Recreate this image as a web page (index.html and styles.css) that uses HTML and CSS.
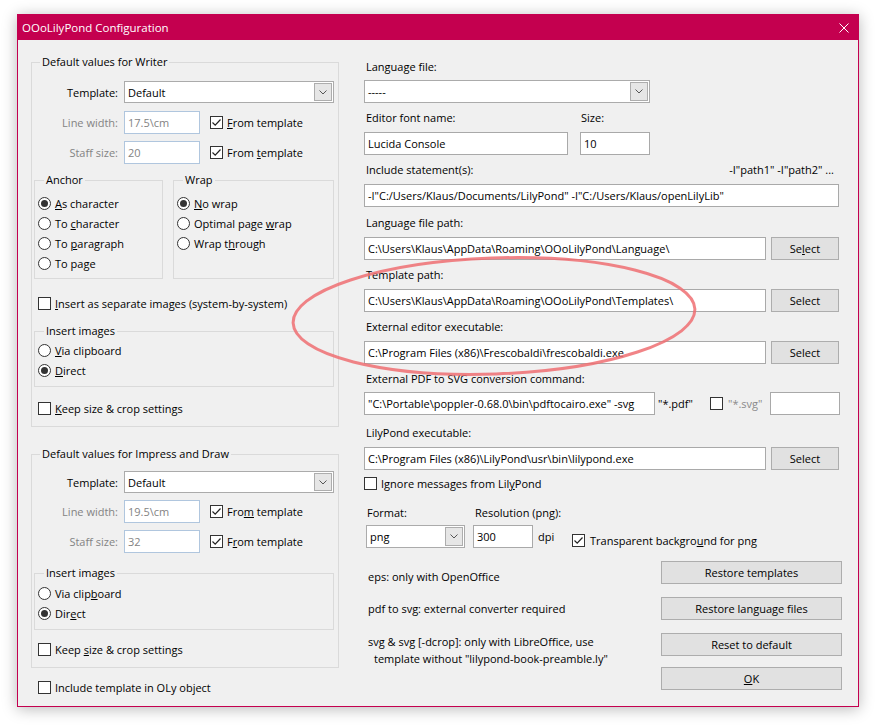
FILE: index.html
```html
<!DOCTYPE html>
<html>
<head>
<meta charset="utf-8">
<title>OOoLilyPond Configuration</title>
<link rel="stylesheet" href="styles.css">
</head>
<body>
<div class="window">
  <div class="titlebar">
    <span class="title">OOoLilyPond Configuration</span>
    <svg class="close" width="10" height="10" viewBox="0 0 10 10"><path d="M0.5 0.5 L9.5 9.5 M9.5 0.5 L0.5 9.5" stroke="#fff" stroke-width="1" fill="none"/></svg>
  </div>
  <div class="content">
    <div class="left">
      <fieldset class="group writer">
        <legend>Default values for Writer</legend>
        <div class="frow crow">
          <span class="flabel">Template:</span>
          <div class="combo w210">Default<span class="drop"><svg width="8" height="5" viewBox="0 0 8 5"><polyline points="0.5,0.5 4,4 7.5,0.5" fill="none" stroke="#555" stroke-width="1"/></svg></span></div>
        </div>
        <div class="frow">
          <span class="flabel dis">Line width:</span>
          <div class="field dis w76">17.5\cm</div>
          <span class="chk ml10"><span class="cb on"><svg width="11" height="11" viewBox="0 0 11 11"><path d="M1.5 5.5 L4.2 8.2 L9.5 2.5" fill="none" stroke="#222" stroke-width="1.2"/></svg></span><span><u>F</u>rom template</span></span>
        </div>
        <div class="frow">
          <span class="flabel dis">Staff size:</span>
          <div class="field dis w76">20</div>
          <span class="chk ml10"><span class="cb on"><svg width="11" height="11" viewBox="0 0 11 11"><path d="M1.5 5.5 L4.2 8.2 L9.5 2.5" fill="none" stroke="#222" stroke-width="1.2"/></svg></span><span>From <u>t</u>emplate</span></span>
        </div>
        <div class="pair">
          <fieldset class="group sub anchor">
            <legend>Anchor</legend>
            <div class="opt"><span class="rb on"></span><span><u>A</u>s character</span></div>
            <div class="opt"><span class="rb"></span><span>To <u>c</u>haracter</span></div>
            <div class="opt"><span class="rb"></span><span>To <u>p</u>aragraph</span></div>
            <div class="opt"><span class="rb"></span><span>To pa<u>g</u>e</span></div>
          </fieldset>
          <fieldset class="group sub wrapbox">
            <legend>Wrap</legend>
            <div class="opt"><span class="rb on"></span><span><u>N</u>o wrap</span></div>
            <div class="opt"><span class="rb"></span><span>Optimal page <u>w</u>rap</span></div>
            <div class="opt"><span class="rb"></span><span>Wrap t<u>h</u>rough</span></div>
          </fieldset>
        </div>
        <div class="opt sep"><span class="cb"></span><span><u>I</u>nsert as separate images (system-by-system)</span></div>
        <fieldset class="group sub images">
          <legend>Insert images</legend>
          <div class="opt"><span class="rb"></span><span><u>V</u>ia clipboard</span></div>
          <div class="opt"><span class="rb on"></span><span><u>D</u>irect</span></div>
        </fieldset>
        <div class="opt keep"><span class="cb"></span><span><u>K</u>eep size &amp; crop settings</span></div>
      </fieldset>

      <fieldset class="group impress">
        <legend>Default values for Impress and Draw</legend>
        <div class="frow crow">
          <span class="flabel">Template:</span>
          <div class="combo w210">Default<span class="drop"><svg width="8" height="5" viewBox="0 0 8 5"><polyline points="0.5,0.5 4,4 7.5,0.5" fill="none" stroke="#555" stroke-width="1"/></svg></span></div>
        </div>
        <div class="frow">
          <span class="flabel dis">Line width:</span>
          <div class="field dis w76">19.5\cm</div>
          <span class="chk ml10"><span class="cb on"><svg width="11" height="11" viewBox="0 0 11 11"><path d="M1.5 5.5 L4.2 8.2 L9.5 2.5" fill="none" stroke="#222" stroke-width="1.2"/></svg></span><span>Fro<u>m</u> template</span></span>
        </div>
        <div class="frow mb8">
          <span class="flabel dis">Staff size:</span>
          <div class="field dis w76">32</div>
          <span class="chk ml10"><span class="cb on"><svg width="11" height="11" viewBox="0 0 11 11"><path d="M1.5 5.5 L4.2 8.2 L9.5 2.5" fill="none" stroke="#222" stroke-width="1.2"/></svg></span><span>F<u>r</u>om template</span></span>
        </div>
        <fieldset class="group sub images images2">
          <legend>Insert images</legend>
          <div class="opt"><span class="rb"></span><span>Via clip<u>b</u>oard</span></div>
          <div class="opt"><span class="rb on"></span><span>Dir<u>e</u>ct</span></div>
        </fieldset>
        <div class="opt keep2"><span class="cb"></span><span>Keep <u>s</u>ize &amp; crop settings</span></div>
      </fieldset>
      <div class="opt incl"><span class="cb"></span><span>Include template in OLy ob<u>j</u>ect</span></div>
    </div>

    <div class="right">
      <div class="blk b1">
        <div class="lbl">Language file:</div>
        <div class="combo w286 h23">-----<span class="drop"><svg width="8" height="5" viewBox="0 0 8 5"><polyline points="0.5,0.5 4,4 7.5,0.5" fill="none" stroke="#555" stroke-width="1"/></svg></span></div>
      </div>
      <div class="blk">
        <div class="lbl split"><span class="fontlbl">Editor font name:</span><span>Size:</span></div>
        <div class="ctl"><div class="field w204">Lucida Console</div><div class="field w70 ml12">10</div></div>
      </div>
      <div class="blk b3">
        <div class="lbl between"><span>Include statement(s):</span><span>-I"path1" -I"path2" ...</span></div>
        <div class="ctl"><div class="field w475">-I"C:/Users/Klaus/Documents/LilyPond" -I"C:/Users/Klaus/openLilyLib"</div></div>
      </div>
      <div class="blk">
        <div class="lbl">Language file path:</div>
        <div class="ctl path"><div class="field grow">C:\Users\Klaus\AppData\Roaming\OOoLilyPond\Language\</div><div class="btn sel">Se<u>l</u>ect</div></div>
      </div>
      <div class="blk">
        <div class="lbl">Template path:</div>
        <div class="ctl path"><div class="field grow">C:\Users\Klaus\AppData\Roaming\OOoLilyPond\Templates\</div><div class="btn sel">Select</div></div>
      </div>
      <div class="blk">
        <div class="lbl">External editor executable:</div>
        <div class="ctl path"><div class="field grow">C:\Program Files (x86)\Frescobaldi\frescobaldi.exe</div><div class="btn sel">Select</div></div>
      </div>
      <div class="blk b5">
        <div class="lbl">External PDF to SVG conversion command:</div>
        <div class="ctl pdf">
          <div class="field w291">"C:\Portable\poppler-0.68.0\bin\pdftocairo.exe" -svg</div>
          <span class="pdftxt">"*.pdf"</span>
          <span class="cb"></span>
          <span class="svgtxt">"*.svg"</span>
          <div class="field w70"></div>
        </div>
      </div>
      <div class="blk b6">
        <div class="lbl">LilyPond executable:</div>
        <div class="ctl path"><div class="field grow">C:\Program Files (x86)\LilyPond\usr\bin\lilypond.exe</div><div class="btn sel">Select</div></div>
      </div>
      <div class="opt ignore"><span class="cb"></span><span>Ignore messages from Lil<u>y</u>Pond</span></div>
      <div class="lbl fmtlbl"><span class="fmtcol">Format:</span><span>Resolution (png):</span></div>
      <div class="ctl fmt">
        <div class="combo w99 h23">png<span class="drop"><svg width="8" height="5" viewBox="0 0 8 5"><polyline points="0.5,0.5 4,4 7.5,0.5" fill="none" stroke="#555" stroke-width="1"/></svg></span></div>
        <div class="field w60 ml8">300</div>
        <span class="dpi">dpi</span>
        <span class="chk transp"><span class="cb on"><svg width="11" height="11" viewBox="0 0 11 11"><path d="M1.5 5.5 L4.2 8.2 L9.5 2.5" fill="none" stroke="#222" stroke-width="1.2"/></svg></span><span>Transparent backgro<u>u</u>nd for png</span></span>
      </div>
      <div class="bottom">
        <div class="notes">
          <div class="note n1">eps: only with OpenOffice</div>
          <div class="note n2">pdf to svg: external converter required</div>
          <div class="note n3"><span class="line">svg &amp; svg [-dcrop]: only with LibreOffice, use</span><span class="line ind">template without "lilypond-book-preamble.ly"</span></div>
        </div>
        <div class="buttons">
          <div class="btn big">Restore templates</div>
          <div class="btn big">Restore language files</div>
          <div class="btn big">Reset to default</div>
          <div class="btn big ok"><u>O</u>K</div>
        </div>
      </div>
    </div>
  </div>
</div>
<svg class="annot" width="878" height="725" viewBox="0 0 878 725"><ellipse cx="494" cy="316" rx="201" ry="58" transform="rotate(-2 494 316)" fill="none" stroke="#EE6E72" stroke-opacity="0.85" stroke-width="3"/></svg>
</body>
</html>
```
FILE: styles.css
```css
* { box-sizing: border-box; }
html, body { margin: 0; padding: 0; background: #ffffff; }
body {
  position: relative;
  width: 878px;
  height: 725px;
  overflow: hidden;
  padding: 14px 0 0 17px;
  font-family: "Open Sans", "Noto Sans", sans-serif;
  font-size: 11px;
  color: #000;
}
u { text-decoration: underline; text-underline-offset: 1px; }

.window {
  width: 842px;
  height: 693px;
  border: 1px solid #C4004F;
  background: #F0F0F0;
  box-shadow: 0 2px 14px rgba(0,0,0,0.28);
  display: flex;
  flex-direction: column;
}
.titlebar {
  height: 25px;
  flex: none;
  background: #C4004F;
  color: #fff;
  display: flex;
  align-items: center;
  justify-content: space-between;
  padding: 0 9px 0 4px;
}
.title { font-size: 11.5px; }
.close { display: block; }

.content {
  display: flex;
  padding: 0 16px 0 13px;
  flex: 1;
}
.left { width: 308px; flex: none; }
.right { width: 478px; flex: none; margin-left: 25px; padding-top: 19px; }

fieldset { margin: 0; padding: 0; border: 1px solid #DADADA; min-width: 0; }
legend { padding: 0 2px; margin-left: 6px; line-height: 16px; height: 16px; white-space: nowrap; }

.writer { margin-top: 14px; padding: 11px 4px 8px 2px; }
.impress { margin-top: 19px; padding: 9px 4px 8px 2px; }

.frow { display: flex; align-items: center; height: 23px; margin-bottom: 7px; }
.frow.crow { height: 22px; }
.writer > .frow.crow { margin-bottom: 8px; }
.frow.mb8 { margin-bottom: 12px; }
.flabel { width: 84px; margin-right: 6px; text-align: right; white-space: nowrap; }
.flabel.dis { color: #838383; }

.combo {
  display: flex;
  align-items: center;
  height: 100%;
  background: #fff;
  border: 1px solid #ABABAB;
  padding-left: 3px;
  white-space: nowrap;
}
.combo.h23 { height: 23px; }
.drop {
  margin-left: auto;
  margin-right: 1px;
  width: 18px;
  height: calc(100% - 2px);
  background: #E6E6E6;
  border: 1px solid #ADADAD;
  display: flex;
  align-items: center;
  justify-content: center;
}
.drop svg { display: block; }

.field {
  height: 23px;
  background: #fff;
  border: 1px solid #A9A9A9;
  padding-left: 3px;
  display: flex;
  align-items: center;
  white-space: nowrap;
  overflow: hidden;
  flex: none;
}
.field.dis { border-color: #B0C6DE; color: #838383; }
.field.grow { flex: 1; }

.w60 { width: 60px; }
.w70 { width: 70px; }
.w76 { width: 76px; }
.w99 { width: 99px; }
.w204 { width: 204px; }
.w210 { width: 210px; }
.w286 { width: 286px; }
.w291 { width: 291px; }
.w475 { width: 475px; }
.ml8 { margin-left: 8px; }
.ml10 { margin-left: 10px; }
.ml12 { margin-left: 12px; }

.chk { display: inline-flex; align-items: center; white-space: nowrap; }
.chk .cb { margin-right: 4px; }
.cb {
  width: 13px;
  height: 13px;
  flex: none;
  background: #fff;
  border: 1px solid #333;
  display: inline-flex;
  align-items: center;
  justify-content: center;
}
.cb svg { display: block; }
.rb {
  width: 13px;
  height: 13px;
  flex: none;
  border-radius: 50%;
  background: #fff;
  border: 1px solid #333;
  display: inline-flex;
  align-items: center;
  justify-content: center;
}
.rb.on::after {
  content: "";
  width: 7px;
  height: 7px;
  border-radius: 50%;
  background: #333;
}

.opt { display: flex; align-items: center; height: 20px; white-space: nowrap; }
.opt .rb, .opt .cb { margin-right: 4px; }

.pair { display: flex; gap: 10px; margin-top: 8px; }
.sub { padding: 5px 0 5px 3px; }
.anchor { width: 129px; }
.wrapbox { width: 161px; }
.sep { margin-top: 14px; padding-left: 4px; }
.images { margin-top: 10px; padding: 1px 0 6px 3px; }
.images.images2 { margin-top: 0; padding-top: 2px; }
.keep { margin-top: 11px; padding-left: 4px; }
.keep2 { margin-top: 9px; padding-left: 4px; }
.incl { margin-top: 9px; padding-left: 7px; }

/* right column */
.blk { margin-bottom: 7px; }
.blk.b1 .lbl { margin-bottom: 5px; }
.blk.b3 { margin-bottom: 8px; }
.blk.b5 { margin-bottom: 10px; }
.blk.b5 .lbl { margin-bottom: 5px; }
.blk.b6 { margin-bottom: 3px; }
.lbl { height: 16px; line-height: 16px; padding-left: 2px; margin-bottom: 6px; white-space: nowrap; }
.lbl.split { display: flex; }
.fontlbl { width: 215px; }
.lbl.between { display: flex; justify-content: space-between; padding-right: 8px; }
.ctl { display: flex; align-items: center; height: 23px; }
.ctl.path { width: 475px; }
.btn {
  background: #E1E1E1;
  border: 1px solid #ADADAD;
  display: flex;
  align-items: center;
  justify-content: center;
  white-space: nowrap;
}
.btn.sel { width: 68px; height: 23px; margin-left: 5px; flex: none; }

.pdftxt { width: 49px; margin-left: 3px; white-space: nowrap; flex: none; }
.ctl.pdf .cb { margin-left: 3px; }
.svgtxt { width: 37px; margin-left: 5px; color: #8A8A8A; white-space: nowrap; flex: none; }
.ctl.pdf .field.w70 { margin-left: 5px; }

.ignore { margin-top: 3px; }
.fmtlbl { display: flex; margin-top: 12px; margin-bottom: 4px; padding-left: 3px; }
.fmtcol { width: 108px; }
.ctl.fmt { padding-left: 2px; }
.dpi { width: 20px; margin-left: 5px; flex: none; }
.transp { margin-left: 14px; margin-top: 7px; }
.transp .cb { margin-right: 5px; }

.bottom { display: flex; margin-top: 13px; }
.notes { width: 297px; padding-left: 4px; flex: none; }
.note { line-height: 16px; white-space: nowrap; }
.n1 { padding-top: 8px; }
.n2 { margin-top: 16px; }
.n3 { margin-top: 16px; line-height: 17px; }
.line { display: block; }
.line.ind { padding-left: 6px; }
.buttons { width: 181px; flex: none; display: flex; flex-direction: column; }
.btn.big { height: 23px; margin-bottom: 13px; }
.btn.big:nth-child(3) { margin-bottom: 11px; }
.btn.ok { margin-bottom: 0; }

.annot { position: absolute; left: 0; top: 0; pointer-events: none; }
```
